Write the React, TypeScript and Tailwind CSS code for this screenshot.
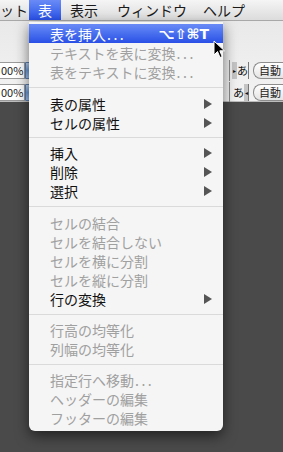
import React from 'react';

type Item =
  | { kind: 'item'; label: string; enabled?: boolean; sub?: boolean; shortcut?: string; active?: boolean }
  | { kind: 'sep'; h: string };

const items: Item[] = [
  { kind: 'item', label: '表を挿入...', enabled: true, active: true, shortcut: '⌥⇧⌘T' },
  { kind: 'item', label: 'テキストを表に変換...' },
  { kind: 'item', label: '表をテキストに変換...' },
  { kind: 'sep', h: 'h-[13px]' },
  { kind: 'item', label: '表の属性', enabled: true, sub: true },
  { kind: 'item', label: 'セルの属性', enabled: true, sub: true },
  { kind: 'sep', h: 'h-[11px]' },
  { kind: 'item', label: '挿入', enabled: true, sub: true },
  { kind: 'item', label: '削除', enabled: true, sub: true },
  { kind: 'item', label: '選択', enabled: true, sub: true },
  { kind: 'sep', h: 'h-[13px]' },
  { kind: 'item', label: 'セルの結合' },
  { kind: 'item', label: 'セルを結合しない' },
  { kind: 'item', label: 'セルを横に分割' },
  { kind: 'item', label: 'セルを縦に分割' },
  { kind: 'item', label: '行の変換', enabled: true, sub: true },
  { kind: 'sep', h: 'h-[12px]' },
  { kind: 'item', label: '行高の均等化' },
  { kind: 'item', label: '列幅の均等化' },
  { kind: 'sep', h: 'h-[12px]' },
  { kind: 'item', label: '指定行へ移動...' },
  { kind: 'item', label: 'ヘッダーの編集' },
  { kind: 'item', label: 'フッターの編集' },
];

const jp = { fontFamily: '"Noto Sans CJK JP", "Noto Sans", sans-serif' };

// trailing "..." is drawn a bit wider, like the Mac menu font
const Label = ({ text }: { text: string }) => {
  if (!text.endsWith('...')) return <span className="flex-1">{text}</span>;
  return (
    <span className="flex-1">
      {text.slice(0, -3)}
      <span className="tracking-[2.5px] pl-[1px]">...</span>
    </span>
  );
};

const SubArrow = () => (
  <svg width="8" height="10" viewBox="0 0 8 10" className="shrink-0">
    <path d="M0 0 L8 5 L0 10 Z" fill="#555555" />
  </svg>
);

const Cursor = () => (
  <svg width="13" height="19" viewBox="0 0 13 19">
    <path d="M1 1 L1 15 L4.5 11.5 L7 17.5 L9.2 16.6 L6.8 10.8 L11.5 10.8 Z" fill="#000" stroke="#fff" strokeWidth="1" strokeLinejoin="round" />
  </svg>
);

const ToolRow = ({ flip }: { flip?: boolean }) => (
  <div className="flex h-[17px] items-stretch">
    <div className="w-[25px] overflow-hidden flex items-center bg-white border border-[#9a9a9a] border-l-0 pl-[1px] text-[11px] text-[#222]" style={jp}>
      00%
    </div>
    <div className="w-[12px] rounded-r-[5px] bg-gradient-to-b from-[#b9d3f2] via-[#6fa0dd] to-[#9cc1ee] border border-[#5a7eb0]" />
    <div className="flex-1" />
    <div className="w-[18px] rounded-r-[6px] bg-gradient-to-b from-[#c3dbf6] via-[#6a9edf] to-[#a7c9f1] border border-[#5a7eb0]" />
    <div className="w-[6px]" />
    <div className="w-px bg-[#8a8a8a] -my-[2px]" />
    <div className="w-[2px]" />
    <div className="w-[17px] flex items-stretch border-r border-[#777] text-[11px] text-[#111]" style={jp}>
      {flip ? (
        <>
          <span className="flex items-center pl-[1px]">あ</span>
          <span className="flex-1 bg-[#c4c4c4] flex items-center justify-center text-[6px]">◂</span>
        </>
      ) : (
        <>
          <span className="w-[6px] bg-[#c4c4c4] flex items-center justify-center text-[6px]">▸</span>
          <span className="flex items-center">あ</span>
        </>
      )}
    </div>
    <div className="w-[4px]" />
    <div className="w-[30px] rounded-l-[8px] border border-r-0 border-[#8d8d8d] bg-gradient-to-b from-white to-[#e4e4e4] flex items-center pl-[5px] text-[11px] text-[#222] overflow-hidden whitespace-nowrap" style={jp}>
      自動
    </div>
  </div>
);

export default function App() {
  return (
    <div className="relative w-[283px] h-[452px] overflow-hidden bg-[#4a4a4a] flex flex-col" style={jp}>
      {/* menubar */}
      <div className="h-[21px] flex items-stretch bg-gradient-to-b from-[#f5f5f5] to-[#dcdcdc] border-b border-[#a8a8a8] text-[14px] text-[#1a1a1a] leading-none">
        <div className="w-[29px] flex items-center whitespace-nowrap">ット</div>
        <div className="w-[32px] flex items-center justify-center text-white bg-gradient-to-b from-[#6a8bf6] to-[#2a4fe6]">表</div>
        <div className="ml-[9px] flex items-center">表示</div>
        <div className="ml-[19px] flex items-center">ウィンドウ</div>
        <div className="ml-[16px] flex items-center">ヘルプ</div>
      </div>
      {/* toolbar */}
      <div className="h-[81px] bg-gradient-to-b from-[#e9e9e9] to-[#f3f3f3] border-b border-[#bdbdbd] flex flex-col pt-[41px] gap-[5px]">
        <ToolRow />
        <ToolRow flip />
      </div>
      <div className="flex-1 bg-[#4a4a4a]" />

      {/* dropdown menu */}
      <div className="absolute left-[29px] top-[22px] w-[194px] bg-[#f5f5f5] rounded-b-[6px] shadow-[0_5px_14px_rgba(0,0,0,0.55)] pt-[2px] pb-[4px]">
        {items.map((it, i) =>
          it.kind === 'sep' ? (
            <div key={i} className={`${it.h} flex items-center`}>
              <div className="w-full h-px bg-[#dadada]" />
            </div>
          ) : (
            <div
              key={i}
              className={`h-[19px] flex items-center pl-[21px] pr-[11px] text-[14px] leading-none whitespace-nowrap ${
                it.active
                  ? 'bg-gradient-to-b from-[#6a8bf6] to-[#2a4fe6] text-white'
                  : it.enabled
                  ? 'text-[#111]'
                  : 'text-[#a0a0a0]'
              }`}
            >
              <Label text={it.label} />
              {it.shortcut && (
                <span className="pr-[3px] text-[14px] font-bold" style={{ fontFamily: '"DejaVu Sans", sans-serif' }}>
                  {it.shortcut}
                </span>
              )}
              {it.sub && <SubArrow />}
            </div>
          )
        )}
      </div>

      {/* mouse pointer */}
      <div className="absolute left-[213px] top-[40px]">
        <Cursor />
      </div>
    </div>
  );
}
